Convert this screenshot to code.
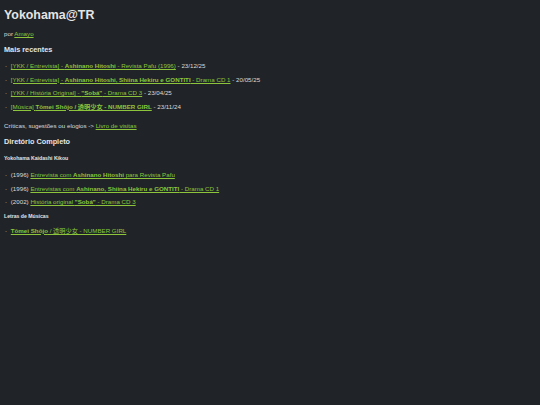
import React from 'react';

const recent = [
  {
    pre: '[YKK / Entrevista] - ',
    bold: 'Ashinano Hitoshi',
    post: ' - Revista Pafu (1996)',
    date: '23/12/25',
  },
  {
    pre: '[YKK / Entrevista] - ',
    bold: 'Ashinano Hitoshi, Shiina Hekiru e GONTITI',
    post: ' - Drama CD 1',
    date: '20/05/25',
  },
  {
    pre: '[YKK / História Original] - ',
    bold: '"Sobá"',
    post: ' - Drama CD 3',
    date: '23/04/25',
  },
  {
    pre: '[Música] ',
    bold: 'Tômei Shôjo / 透明少女 - NUMBER GIRL',
    post: '',
    date: '23/11/24',
  },
];

const ykk = [
  { year: '1996', pre: 'Entrevista com ', bold: 'Ashinano Hitoshi', post: ' para Revista Pafu' },
  { year: '1996', pre: 'Entrevistas com ', bold: 'Ashinano, Shiina Hekiru e GONTITI', post: ' - Drama CD 1' },
  { year: '2002', pre: 'História original ', bold: '"Sobá"', post: ' - Drama CD 3' },
];

const linkCls = 'text-[#8cc43c] underline underline-offset-[1px] decoration-[1px]';

const App = () => {
  return (
    <div
      className="min-h-[405px] w-full bg-[#202428] text-[#dadada] px-[4px] text-[6.2px]"
      style={{ fontFamily: '"Liberation Sans", Arial, "Noto Sans CJK JP", sans-serif' }}
    >
      <h1 className="pt-[8px] text-[12.4px] leading-[14px] font-bold text-[#e4e4e4]">Yokohama@TR</h1>

      <p className="mt-[8px] leading-[8px]">
        por <a className={linkCls}>Amayo</a>
      </p>

      <h3 className="mt-[7px] text-[7.3px] leading-[9px] font-bold text-[#e4e4e4]">Mais recentes</h3>

      <ul className="mt-[5px]">
        {recent.map((r, i) => (
          <li key={i} className="leading-[13.6px] pl-[1px]">
            <span className="mr-[2px]">·</span>{' '}
            <a className={linkCls}>
              {r.pre}
              <b>{r.bold}</b>
              {r.post}
            </a>{' '}
            - {r.date}
          </li>
        ))}
      </ul>

      <p className="mt-[9px] leading-[8px]">
        Críticas, sugestões ou elogios -&gt; <a className={linkCls}>Livro de visitas</a>
      </p>

      <h3 className="mt-[7px] text-[7.3px] leading-[9px] font-bold text-[#e4e4e4]">Diretório Completo</h3>

      <h5 className="mt-[9px] text-[5.15px] leading-[7px] font-bold text-[#e4e4e4]">Yokohama Kaidashi Kikou</h5>

      <ul className="mt-[6px]">
        {ykk.map((r, i) => (
          <li key={i} className="leading-[13.4px] pl-[1px]">
            <span className="mr-[2px]">·</span> ({r.year}){' '}
            <a className={linkCls}>
              {r.pre}
              <b>{r.bold}</b>
              {r.post}
            </a>
          </li>
        ))}
      </ul>

      <h5 className="mt-[4px] text-[5.15px] leading-[7px] font-bold text-[#e4e4e4]">Letras de Músicas</h5>

      <ul className="mt-[4px]">
        <li className="leading-[13.4px] pl-[1px]">
          <span className="mr-[2px]">·</span>{' '}
          <a className={linkCls}>
            <b>Tômei Shôjo</b> / 透明少女 - NUMBER GIRL
          </a>
        </li>
      </ul>
    </div>
  );
};

export default App;
